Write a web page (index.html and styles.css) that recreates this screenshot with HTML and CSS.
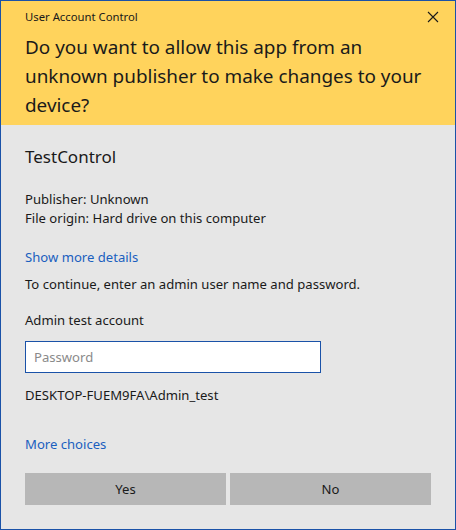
FILE: index.html
```html
<!DOCTYPE html>
<html>
<head>
<meta charset="utf-8">
<link rel="stylesheet" href="styles.css">
</head>
<body>
<div class="window">
  <div class="header">
    <div class="titlebar">
      <span class="title">User Account Control</span>
      <svg class="close" width="12" height="12" viewBox="0 0 12 12"><path d="M1 1L11 11M11 1L1 11" stroke="#1a1a1a" stroke-width="1.1" fill="none"/></svg>
    </div>
    <div class="question">Do you want to allow this app from an unknown publisher to make changes to your device?</div>
  </div>
  <div class="content">
    <div class="app">TestControl</div>
    <div class="info">
      <div>Publisher: Unknown</div>
      <div>File origin: Hard drive on this computer</div>
    </div>
    <div class="link details">Show more details</div>
    <div class="text cont">To continue, enter an admin user name and password.</div>
    <div class="text account">Admin test account</div>
    <div class="input"><span class="placeholder">Password</span></div>
    <div class="text user">DESKTOP-FUEM9FA\Admin_test</div>
    <div class="link more">More choices</div>
    <div class="buttons">
      <div class="btn">Yes</div>
      <div class="btn">No</div>
    </div>
  </div>
</div>
</body>
</html>
```
FILE: styles.css
```css
html, body { margin: 0; padding: 0; }
body { font-family: "Noto Sans", "Open Sans", sans-serif; color: #1a1a1a; }
.window {
  width: 456px; height: 530px; box-sizing: border-box;
  border: 1px solid #1a52a8; background: #e6e6e6;
  display: flex; flex-direction: column;
}
.header { background: #ffd35c; height: 124px; box-sizing: border-box; padding: 0 10px 0 24px; }
.titlebar { display: flex; justify-content: space-between; align-items: center; height: 31px; }
.title { font-size: 11.3px; }
.close { margin-right: 6px; }
.question { font-size: 18.9px; line-height: 29px; margin-top: 1px; }
.content { padding: 0 24px; font-size: 13.1px; }
.app { font-size: 17px; margin-top: 19px; line-height: 26px; }
.info { margin-top: 20px; line-height: 19px; }
.link { color: #1a5fbf; }
.details { margin-top: 20px; line-height: 19px; }
.text { line-height: 19px; }
.cont { margin-top: 8px; }
.account { margin-top: 17px; }
.input { margin-top: 11px; width: 296px; height: 32px; box-sizing: border-box; border: 1px solid #1a52a8; background: #fff; display: flex; align-items: center; padding-left: 8px; }
.placeholder { color: #8a8a8a; }
.user { margin-top: 13px; }
.more { margin-top: 30px; line-height: 19px; }
.buttons { display: flex; gap: 4px; margin-top: 19px; }
.btn { flex: 1; height: 32px; background: #b7b7b7; display: flex; align-items: center; justify-content: center; }
```
